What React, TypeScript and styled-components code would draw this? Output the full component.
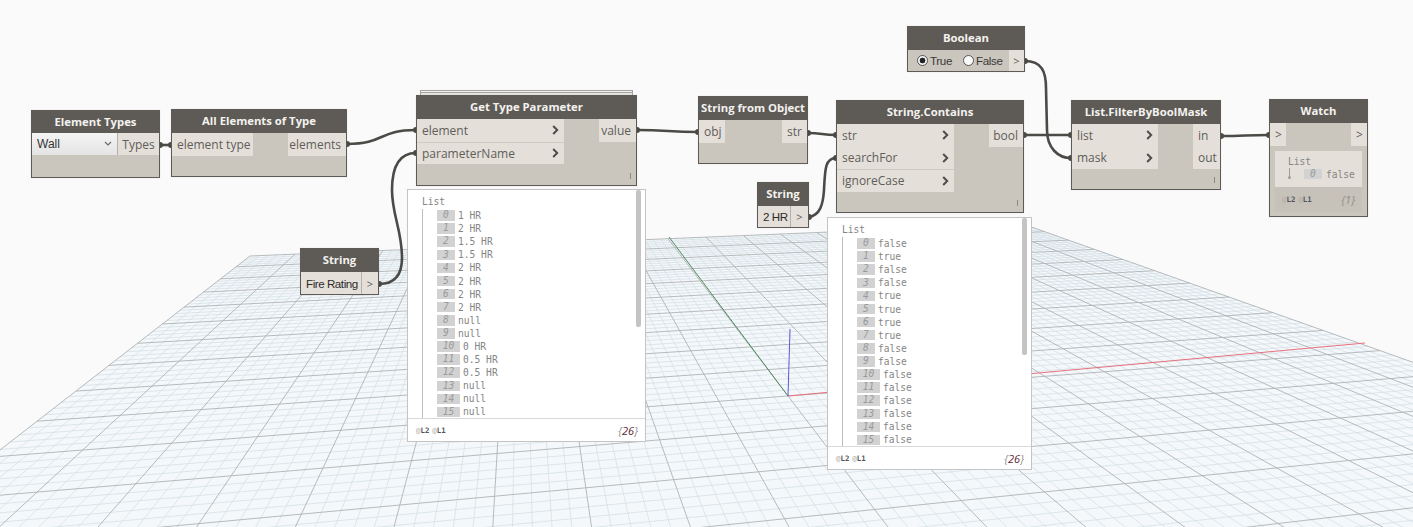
import React from "react";
import styled, { createGlobalStyle } from "styled-components";

const Global = createGlobalStyle`
  html, body { margin: 0; padding: 0; background: #fafafa; }
`;

const Canvas = styled.div`
  position: relative;
  width: 1413px;
  height: 527px;
  overflow: hidden;
  background: #fafafa;
  font-family: "Open Sans", "Liberation Sans", sans-serif;
`;

const Layer = styled.svg`
  position: absolute;
  left: 0;
  top: 0;
`;

const Node = styled.div<{ $x: number; $y: number; $w: number; $h: number }>`
  position: absolute;
  left: ${(p) => p.$x}px;
  top: ${(p) => p.$y}px;
  width: ${(p) => p.$w}px;
  height: ${(p) => p.$h}px;
  box-sizing: border-box;
  display: flex;
  flex-direction: column;
  background: #cac6be;
  border: 1px solid #5e5b57;
  box-shadow: 0 0 1px rgba(0, 0, 0, 0.15);
`;

const Stack = styled.div<{ $x: number; $y: number; $w: number }>`
  position: absolute;
  left: ${(p) => p.$x}px;
  top: ${(p) => p.$y}px;
  width: ${(p) => p.$w}px;
  height: 6px;
  box-sizing: border-box;
  background: #e9e7e3;
  border: 1px solid #a5a29c;
  border-bottom: none;
  box-shadow: inset 0 1px 0 #f4f4f4, inset 0 2px 0 #a5a29c;
`;

const Header = styled.div<{ $short?: boolean }>`
  flex: 0 0 ${(p) => (p.$short ? 22 : 23)}px;
  box-sizing: border-box;
  padding-bottom: ${(p) => (p.$short ? 1 : 2)}px;
  display: flex;
  align-items: center;
  justify-content: center;
  background: #5e5b57;
  color: #f4f2ee;
  font-size: 11.3px;
  font-weight: 700;
  white-space: nowrap;
`;

const Body = styled.div`
  flex: 1;
  position: relative;
  display: flex;
  align-items: flex-start;
  justify-content: space-between;
`;

const Column = styled.div`
  display: flex;
  flex-direction: column;
`;

const Port = styled.div<{ $w?: number; $line?: boolean; $right?: boolean }>`
  box-sizing: border-box;
  width: ${(p) => (p.$w ? `${p.$w}px` : "auto")};
  height: 22.5px;
  padding: 0 5px;
  display: flex;
  align-items: center;
  justify-content: ${(p) => (p.$right ? "flex-end" : "space-between")};
  background: #e4e0d9;
  color: #5f5d5a;
  font-size: 12px;
  white-space: nowrap;
  border-top: ${(p) => (p.$line ? "1px solid #cfcbc4" : "0")};
`;

const Marker = styled.span`
  position: absolute;
  right: 5px;
  bottom: 6px;
  width: 1px;
  height: 6px;
  background: #8c8982;
`;

const InputRow = styled.div`
  display: flex;
  height: 22px;
`;

const TextValue = styled.div`
  flex: 1;
  display: flex;
  align-items: center;
  padding-left: 5px;
  background: #e4e0d9;
  color: #2c2b2a;
  font-family: "Liberation Sans", sans-serif;
  font-size: 11.6px;
  letter-spacing: -0.45px;
  white-space: nowrap;
`;

const ArrowBox = styled.div<{ $w: number; $line?: boolean; $text?: boolean }>`
  flex: 0 0 ${(p) => p.$w}px;
  box-sizing: border-box;
  display: flex;
  align-items: center;
  justify-content: center;
  background: #e4e0d9;
  color: #5f5d5a;
  font-size: ${(p) => (p.$text ? 12 : 11)}px;
  border-left: ${(p) => (p.$line ? "1px solid #b5b1aa" : "0")};
`;

const SelectBox = styled.div`
  flex: 1;
  box-sizing: border-box;
  display: flex;
  align-items: center;
  justify-content: space-between;
  padding: 0 5px;
  background: linear-gradient(#f4f4f4, #e4e4e4);
  color: #333;
  font-family: "Liberation Sans", sans-serif;
  font-size: 12px;
  border-right: 1px solid #b5b1aa;
`;

const RadioGroup = styled.div`
  flex: 1;
  display: flex;
  align-items: center;
  padding-left: 9px;
  color: #3a3937;
  font-family: "Liberation Sans", sans-serif;
  font-size: 11.6px;
  letter-spacing: -0.35px;
`;

const RadioItem = styled.span`
  flex: 0 0 46px;
  display: flex;
  align-items: center;
  gap: 2px;
`;

const RadioDot = styled.span<{ $on?: boolean }>`
  box-sizing: border-box;
  width: 11px;
  height: 11px;
  border-radius: 50%;
  border: 1px solid #555;
  background: ${(p) => (p.$on ? "radial-gradient(circle, #222 0 2.6px, #f6f6f6 3.2px)" : "#fbfbfb")};
`;

const Panel = styled.div<{ $x: number; $y: number; $w: number; $h: number }>`
  position: absolute;
  left: ${(p) => p.$x}px;
  top: ${(p) => p.$y}px;
  width: ${(p) => p.$w}px;
  height: ${(p) => p.$h}px;
  box-sizing: border-box;
  display: flex;
  flex-direction: column;
  background: #fff;
  border: 1px solid #c4c4c4;
`;

const ListArea = styled.div`
  position: relative;
  flex: 1;
  overflow: hidden;
  padding: 5px 0 0 14px;
  font-family: "DejaVu Sans Mono", "Liberation Mono", monospace;
  font-size: 9.6px;
  color: #858585;
`;

const ListTitle = styled.div`
  height: 14px;
  line-height: 13px;
`;

const ListBody = styled.div`
  display: flex;
  flex-direction: column;
  border-left: 1px solid #bdbdbd;
  padding-left: 14px;
`;

const Row = styled.div`
  display: flex;
  align-items: center;
  height: 13.1px;
  flex: 0 0 13.1px;
  gap: 3px;
`;

const Index = styled.span<{ $wide: boolean }>`
  box-sizing: border-box;
  width: ${(p) => (p.$wide ? 23 : 18)}px;
  height: 10.5px;
  line-height: 10.5px;
  text-align: center;
  background: #d2d2d2;
  color: #9a9a9a;
  font-style: italic;
`;

const Scrollbar = styled.div<{ $h: number }>`
  position: absolute;
  right: 4px;
  top: 0;
  width: 5px;
  height: ${(p) => p.$h}px;
  border-radius: 2px;
  background: #c4c4c4;
`;

const Footer = styled.div`
  flex: 0 0 22px;
  display: flex;
  align-items: center;
  justify-content: space-between;
  padding: 0 7px 0 8px;
  border-top: 1px solid #d8d8d8;
`;

const Levels = styled.span`
  display: flex;
  gap: 3px;
  font-family: "DejaVu Sans Mono", monospace;
  font-size: 7.4px;
  font-weight: 700;
  color: #555;
`;

const At = styled.span`
  color: #aaa;
  font-weight: 400;
`;

const Count = styled.span<{ $muted?: boolean }>`
  font-family: "Open Sans", sans-serif;
  font-size: 11px;
  font-style: italic;
  color: ${(p) => (p.$muted ? "#8f8b84" : "#5f2233")};
`;

const Brace = styled.span`
  color: #8f8b84;
`;

const WatchPorts = styled.div`
  flex: 0 0 22.5px;
  display: flex;
  justify-content: space-between;
`;

const WatchBody = styled.div`
  margin: 5px 5px 4px;
  flex: 1;
  display: flex;
  flex-direction: column;
`;

const WatchInner = styled.div`
  position: relative;
  flex: 0 0 36px;
  background: #e4e0d9;
  font-family: "DejaVu Sans Mono", monospace;
  font-size: 9.6px;
  color: #858585;
`;

const WatchList = styled.span`
  position: absolute;
  left: 13px;
  top: 5px;
`;

const WatchStem = styled.span`
  position: absolute;
  left: 14px;
  top: 17px;
  width: 1px;
  height: 10px;
  background: #a09c96;

  &::after {
    content: "";
    position: absolute;
    left: -1px;
    bottom: -1px;
    width: 3px;
    height: 3px;
    border-radius: 50%;
    background: #a09c96;
  }
`;

const WatchRow = styled.span`
  position: absolute;
  left: 29px;
  top: 18px;
  display: flex;
  gap: 4px;
  align-items: center;
`;

const WatchFooter = styled.div`
  flex: 1;
  display: flex;
  align-items: center;
  justify-content: space-between;
  padding: 0 7px;
  background: #c6c2ba;
`;

const Chevron = () => (
  <svg width="7" height="10" viewBox="0 0 7 10">
    <path d="M1.2 1 L5.2 5 L1.2 9" fill="none" stroke="#4f4d4a" strokeWidth="2" />
  </svg>
);

const Caret = () => (
  <svg width="8" height="6" viewBox="0 0 8 6">
    <path d="M1 1 L4 4 L7 1" fill="none" stroke="#666" strokeWidth="1.1" />
  </svg>
);

/* homography of the ground plane, from four measured points */
function solve(src: number[][], dst: number[][]) {
  const A: number[][] = [];
  src.forEach(([x, y], i) => {
    const [X, Y] = dst[i];
    A.push([x, y, 1, 0, 0, 0, -x * X, -y * X, X]);
    A.push([0, 0, 0, x, y, 1, -x * Y, -y * Y, Y]);
  });
  for (let c = 0; c < 8; c++) {
    let m = c;
    for (let r = c + 1; r < 8; r++) if (Math.abs(A[r][c]) > Math.abs(A[m][c])) m = r;
    [A[c], A[m]] = [A[m], A[c]];
    for (let r = 0; r < 8; r++) {
      if (r === c) continue;
      const f = A[r][c] / A[c][c];
      for (let k = c; k < 9; k++) A[r][k] -= f * A[c][k];
    }
  }
  return A.map((r, i) => r[8] / r[i]);
}

const H = solve(
  [[-1, 1], [1, 1], [0, 0], [1, 0]],
  [[250, 256], [1023, 224], [788, 396], [1380, 350.6]]
);

function project(u: number, v: number) {
  const w = H[6] * u + H[7] * v + 1;
  return { x: (H[0] * u + H[1] * v + H[2]) / w, y: (H[3] * u + H[4] * v + H[5]) / w, w };
}

function segment(u0: number, v0: number, u1: number, v1: number) {
  let first: { x: number; y: number } | null = null;
  let last: { x: number; y: number } | null = null;
  for (let i = 0; i <= 240; i++) {
    const t = i / 240;
    const p = project(u0 + (u1 - u0) * t, v0 + (v1 - v0) * t);
    if (p.w > 0.02 && p.x > -800 && p.x < 2300 && p.y < 900) {
      if (!first) first = p;
      last = p;
    }
  }
  if (!first || !last) return "";
  return `M${first.x.toFixed(1)} ${first.y.toFixed(1)}L${last.x.toFixed(1)} ${last.y.toFixed(1)}`;
}

function gridPaths() {
  let minor = "";
  let major = "";
  for (let k = -50; k <= 50; k++) {
    const a = k / 50;
    const d = segment(a, 1, a, -1) + segment(-1, a, 1, a);
    if (k % 5 === 0) major += d;
    else minor += d;
  }
  return { minor, major };
}

const Ground = () => {
  const { minor, major } = gridPaths();
  const pick = (s: string) => s.replace(/[ML]/g, " ").trim().split(/\s+/).map(Number);
  const l = pick(segment(-1, 1, -1, -1));
  const t = pick(segment(-1, 1, 1, 1));
  const r = pick(segment(1, 1, 1, -1));
  const fill = `M${t[0]} ${t[1]}L${t[2]} ${t[3]}L${r[2]} ${r[3]}L2000 900L-800 900L${l[2]} ${l[3]}Z`;
  return (
    <Layer width="1413" height="527">
      <path d={fill} fill="#f5f8fa" />
      <path d={minor} stroke="#d3dfe6" strokeWidth="0.75" fill="none" />
      <path d={major} stroke="#aeb3b6" strokeWidth="0.9" fill="none" />
      <path d="M669 237L788 396" stroke="#4f8a5a" strokeWidth="1" />
      <path d="M788 396L1365 343" stroke="#e8707e" strokeWidth="1" />
      <path d="M788 396L790 329" stroke="#5a5ad0" strokeWidth="1" />
    </Layer>
  );
};

const wires = [
  "M160 145 L171 145",
  "M347 144 C385 144 378 130 416 130",
  "M637 130 C668 130 668 132 698 132",
  "M808 133 C822 133 822 135 836 135",
  "M809 217 C820 215 823 205 824 190 C825 170 825 158 836 158",
  "M379 284 C396 284 402 274 402 258 C402 230 392 215 392 190 C392 165 400 153 416 153",
  "M1025 61 C1042 61 1046 72 1046 88 L1047 130 C1047 148 1058 158 1071 158",
  "M1024 135 L1071 135",
  "M1221 136 C1245 136 1245 135 1269 135",
];

const pins: [number, number][] = [
  [160, 145], [171, 145], [347, 144], [416, 130], [637, 130], [698, 132], [808, 133], [836, 135],
  [809, 217], [836, 158], [379, 284], [416, 153], [1025, 61], [1071, 158], [1024, 135], [1071, 135],
  [1221, 136], [1269, 135],
];

const Wires = () => (
  <Layer width="1413" height="527">
    {wires.map((d) => (
      <path key={d} d={d} fill="none" stroke="#4c4a47" strokeWidth="2.6" />
    ))}
    {pins.map(([x, y]) => (
      <circle key={`${x}-${y}`} cx={x} cy={y} r="3" fill="#4c4a47" />
    ))}
  </Layer>
);

const fireValues = ["1 HR", "2 HR", "1.5 HR", "1.5 HR", "2 HR", "2 HR", "2 HR", "2 HR", "null", "null", "0 HR", "0.5 HR", "0.5 HR", "null", "null", "null"];
const boolValues = ["false", "true", "false", "false", "true", "true", "true", "true", "false", "false", "false", "false", "false", "false", "false", "false"];

const LevelTags = () => (
  <Levels>
    <span><At>@</At>L2</span>
    <span><At>@</At>L1</span>
  </Levels>
);

const WatchPanel = (p: { x: number; y: number; w: number; h: number; bar: number; values: string[] }) => (
  <Panel $x={p.x} $y={p.y} $w={p.w} $h={p.h}>
    <ListArea>
      <ListTitle>List</ListTitle>
      <ListBody>
        {p.values.map((v, i) => (
          <Row key={i}>
            <Index $wide={i > 9}>{i}</Index>
            <span>{v}</span>
          </Row>
        ))}
      </ListBody>
      <Scrollbar $h={p.bar} />
    </ListArea>
    <Footer>
      <LevelTags />
      <Count><Brace>{"{"}</Brace>26<Brace>{"}"}</Brace></Count>
    </Footer>
  </Panel>
);

export default function App() {
  return (
    <Canvas>
      <Global />
      <Ground />
      <Wires />

      <Node $x={31} $y={110} $w={129} $h={68}>
        <Header $short>Element Types</Header>
        <InputRow>
          <SelectBox>Wall<Caret /></SelectBox>
          <ArrowBox $w={41} $text>Types</ArrowBox>
        </InputRow>
      </Node>

      <Node $x={171} $y={109} $w={176} $h={68}>
        <Header>All Elements of Type</Header>
        <Body>
          <Column><Port $w={81}>element type</Port></Column>
          <Column><Port $w={58} $right>elements</Port></Column>
        </Body>
      </Node>

      <Stack $x={420} $y={90} $w={213} />
      <Node $x={416} $y={95} $w={221} $h={91}>
        <Header>Get Type Parameter</Header>
        <Body>
          <Column>
            <Port $w={147}>element<Chevron /></Port>
            <Port $w={147} $line>parameterName<Chevron /></Port>
          </Column>
          <Column><Port $w={37} $right>value</Port></Column>
          <Marker />
        </Body>
      </Node>

      <Node $x={300} $y={248} $w={79} $h={47}>
        <Header>String</Header>
        <InputRow>
          <TextValue>Fire Rating</TextValue>
          <ArrowBox $w={17} $line>&gt;</ArrowBox>
        </InputRow>
      </Node>

      <WatchPanel x={407} y={189} w={239} h={253} bar={137} values={fireValues} />

      <Node $x={698} $y={96} $w={110} $h={68}>
        <Header>String from Object</Header>
        <Body>
          <Column><Port $w={26}>obj</Port></Column>
          <Column><Port $w={25} $right>str</Port></Column>
        </Body>
      </Node>

      <Node $x={836} $y={100} $w={188} $h={113}>
        <Header>String.Contains</Header>
        <Body>
          <Column>
            <Port $w={117}>str<Chevron /></Port>
            <Port $w={117}>searchFor<Chevron /></Port>
            <Port $w={117} $line>ignoreCase<Chevron /></Port>
          </Column>
          <Column><Port $w={34} $right>bool</Port></Column>
          <Marker />
        </Body>
      </Node>

      <Node $x={757} $y={182} $w={52} $h={46}>
        <Header>String</Header>
        <InputRow>
          <TextValue>2 HR</TextValue>
          <ArrowBox $w={18} $line>&gt;</ArrowBox>
        </InputRow>
      </Node>

      <WatchPanel x={827} y={217} w={205} h={253} bar={137} values={boolValues} />

      <Node $x={907} $y={26} $w={118} $h={46}>
        <Header>Boolean</Header>
        <InputRow>
          <RadioGroup>
            <RadioItem><RadioDot $on />True</RadioItem>
            <RadioItem><RadioDot />False</RadioItem>
          </RadioGroup>
          <ArrowBox $w={15}>&gt;</ArrowBox>
        </InputRow>
      </Node>

      <Node $x={1071} $y={100} $w={150} $h={90}>
        <Header>List.FilterByBoolMask</Header>
        <Body>
          <Column>
            <Port $w={86}>list<Chevron /></Port>
            <Port $w={86}>mask<Chevron /></Port>
          </Column>
          <Column>
            <Port $w={27}>in</Port>
            <Port $w={27}>out</Port>
          </Column>
          <Marker />
        </Body>
      </Node>

      <Node $x={1269} $y={99} $w={99} $h={118}>
        <Header>Watch</Header>
        <WatchPorts>
          <Port $w={16}>&gt;</Port>
          <Port $w={16}>&gt;</Port>
        </WatchPorts>
        <WatchBody>
          <WatchInner>
            <WatchList>List</WatchList>
            <WatchStem />
            <WatchRow>
              <Index $wide={false}>0</Index>
              <span>false</span>
            </WatchRow>
          </WatchInner>
          <WatchFooter>
            <LevelTags />
            <Count $muted>{"{1}"}</Count>
          </WatchFooter>
        </WatchBody>
      </Node>
    </Canvas>
  );
}
